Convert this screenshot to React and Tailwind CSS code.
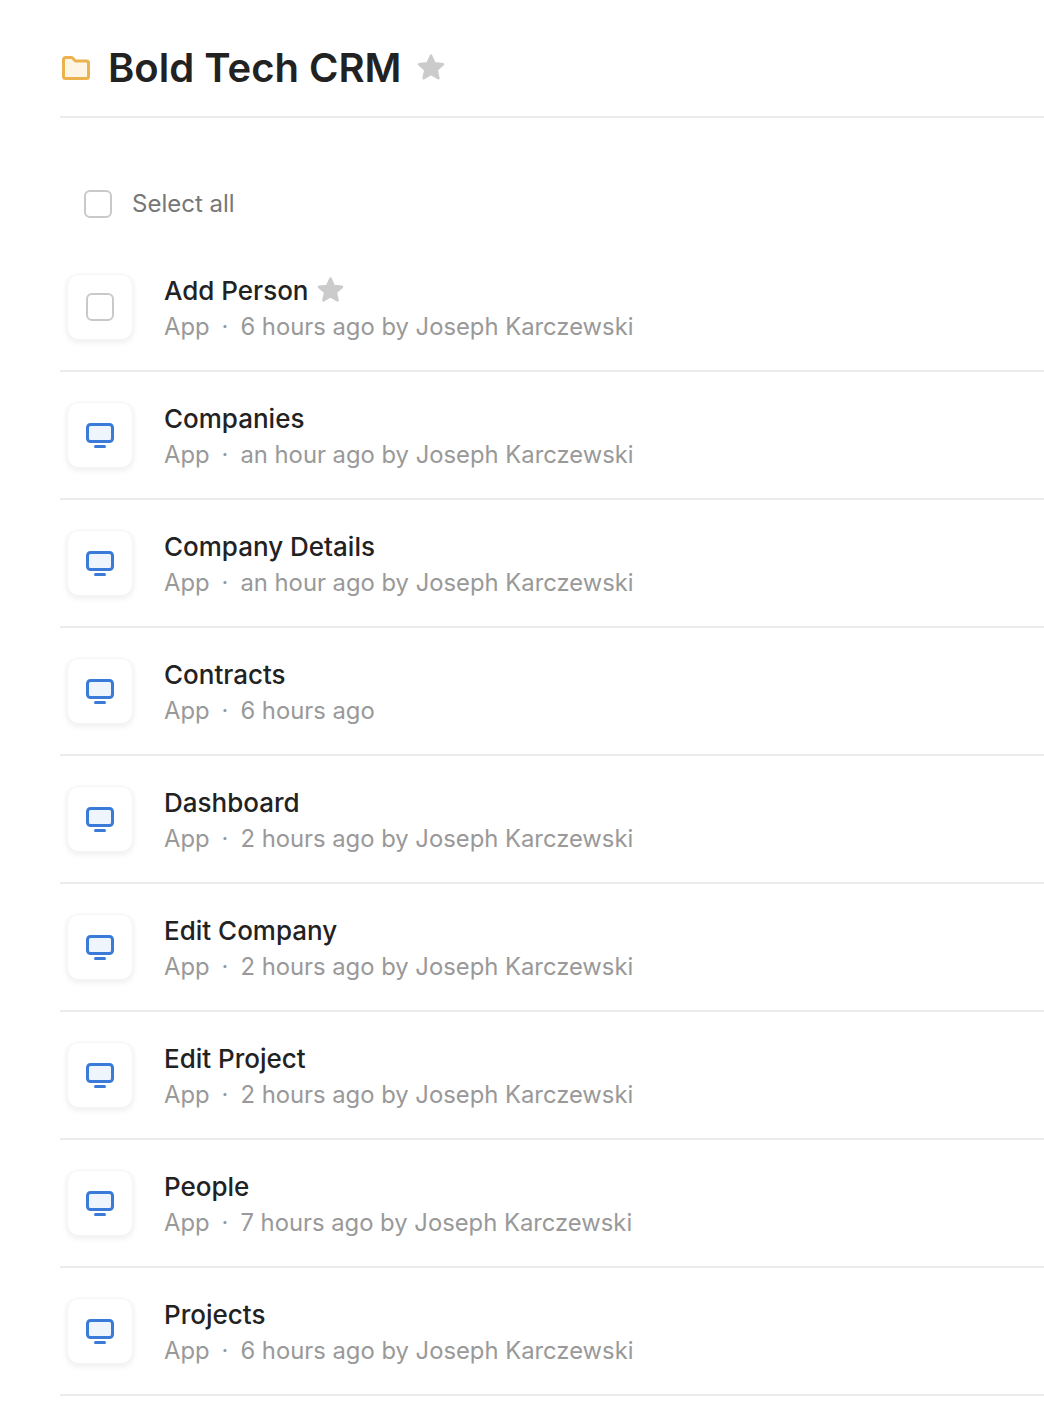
import React from 'react';

const apps = [
  { name: 'Add Person', time: '6 hours ago by Joseph Karczewski', selecting: true },
  { name: 'Companies', time: 'an hour ago by Joseph Karczewski' },
  { name: 'Company Details', time: 'an hour ago by Joseph Karczewski' },
  { name: 'Contracts', time: '6 hours ago' },
  { name: 'Dashboard', time: '2 hours ago by Joseph Karczewski' },
  { name: 'Edit Company', time: '2 hours ago by Joseph Karczewski' },
  { name: 'Edit Project', time: '2 hours ago by Joseph Karczewski' },
  { name: 'People', time: '7 hours ago by Joseph Karczewski' },
  { name: 'Projects', time: '6 hours ago by Joseph Karczewski' },
];

function Star({ className }) {
  return (
    <svg className={className} viewBox="0 0 26 26" fill="#cbcbcb" stroke="#cbcbcb" strokeWidth="2.5" strokeLinejoin="round">
      <path d="M13 2.5l3.2 7.2 7.8.8-5.9 5.2 1.7 7.7-6.8-4-6.8 4 1.7-7.7-5.9-5.2 7.8-.8z" />
    </svg>
  );
}

function MonitorIcon() {
  return (
    <svg className="w-7 h-7" viewBox="0 0 28 28" fill="none">
      <rect x="1.5" y="3.5" width="25" height="17" rx="3" fill="#eef5fc" stroke="#3a7bd9" strokeWidth="3" />
      <rect x="8" y="24" width="12" height="3" rx="1.5" fill="#3a7bd9" />
    </svg>
  );
}

function AppRow({ app }) {
  return (
    <div className="flex items-center h-[128px] border-b-2 border-[#ececec] pl-[7px]">
      <div className="w-[66px] h-[66px] rounded-xl bg-white border border-[#f5f5f5] shadow-[0_2px_6px_rgba(0,0,0,0.08)] flex items-center justify-center">
        {app.selecting ? (
          <div className="w-7 h-7 rounded-md border-2 border-[#c9c9c9] bg-white" />
        ) : (
          <MonitorIcon />
        )}
      </div>
      <div className="ml-[31px] pt-1">
        <div className="flex items-center h-9">
          <span className="text-[26px] font-medium leading-9 text-[#222222]">{app.name}</span>
          {app.selecting && <Star className="w-[27px] h-[27px] ml-[8px] -mt-[3px]" />}
        </div>
        <div className="text-[23.8px] leading-9 text-[#999999] whitespace-pre">
          App<span className="mx-[12px]">·</span>{app.time}
        </div>
      </div>
    </div>
  );
}

export default function App() {
  return (
    <div className="w-[1044px] h-[1428px] bg-white pl-[60px] overflow-hidden font-['Inter',sans-serif]">
      <div className="flex items-center h-[118px] pt-[20px] border-b-2 border-[#ececec]">
        <svg className="w-8 h-8 -mt-[2px]" viewBox="0 0 32 32" fill="#fef5e5" stroke="#ecb24e" strokeWidth="3" strokeLinejoin="round">
          <path d="M3.5 8.5a2 2 0 0 1 2-2h6.5l3.5 3.5h11a2 2 0 0 1 2 2v13.5a2 2 0 0 1-2 2h-21a2 2 0 0 1-2-2z" />
        </svg>
        <h1 className="ml-4 text-[40px] font-semibold leading-none text-[#222222]">Bold Tech CRM</h1>
        <Star className="w-7 h-7 ml-[15px] -mt-[2px]" />
      </div>
      <div className="flex items-center h-[56px] mt-[58px] pl-6 mb-[12px]">
        <div className="w-7 h-7 rounded-md border-2 border-[#c9c9c9] bg-white" />
        <span className="ml-5 text-[24px] text-[#777777]">Select all</span>
      </div>
      {apps.map((app) => (
        <AppRow key={app.name} app={app} />
      ))}
    </div>
  );
}
